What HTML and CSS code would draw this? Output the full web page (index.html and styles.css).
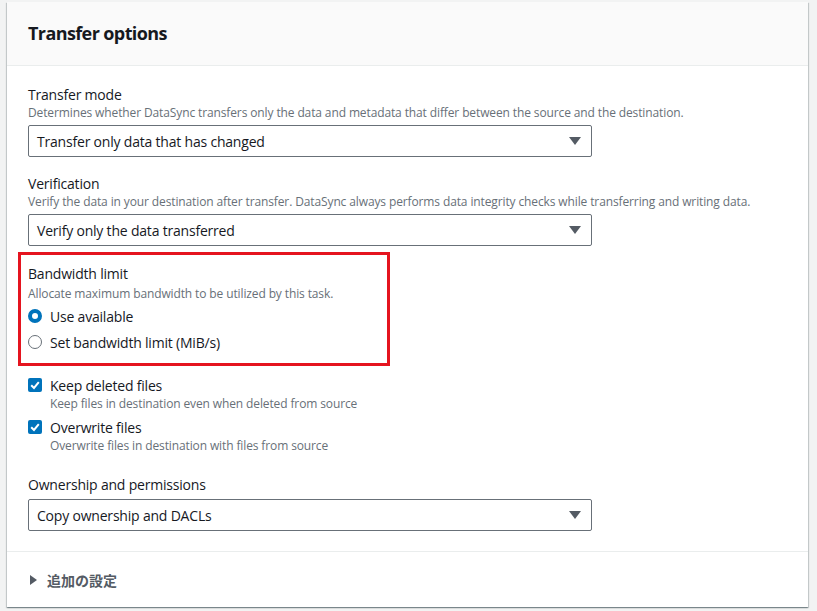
FILE: index.html
```html
<!DOCTYPE html>
<html>
<head>
<meta charset="utf-8">
<link rel="stylesheet" href="styles.css">
</head>
<body>
<div class="card">
  <div class="card-header"><h2 class="title">Transfer options</h2></div>
  <div class="card-body">
    <div class="field">
      <div class="label">Transfer mode</div>
      <div class="desc">Determines whether DataSync transfers only the data and metadata that differ between the source and the destination.</div>
      <div class="select"><span>Transfer only data that has changed</span><span class="caret"></span></div>
    </div>
    <div class="field">
      <div class="label">Verification</div>
      <div class="desc">Verify the data in your destination after transfer. DataSync always performs data integrity checks while transferring and writing data.</div>
      <div class="select"><span>Verify only the data transferred</span><span class="caret"></span></div>
    </div>
    <div class="highlight">
      <div class="label">Bandwidth limit</div>
      <div class="desc desc-bw">Allocate maximum bandwidth to be utilized by this task.</div>
      <div class="radio-list">
        <div class="radio-row"><span class="radio checked"></span><span>Use available</span></div>
        <div class="radio-row"><span class="radio"></span><span>Set bandwidth limit (MiB/s)</span></div>
      </div>
    </div>
    <div class="checks">
      <div class="check-item">
        <div class="check-row"><span class="checkbox"><svg viewBox="0 0 14 14" width="14" height="14"><path d="M3.2 7.2 L6 10 L10.8 4.2" fill="none" stroke="#fff" stroke-width="2"/></svg></span><span>Keep deleted files</span></div>
        <div class="check-desc">Keep files in destination even when deleted from source</div>
      </div>
      <div class="check-item">
        <div class="check-row"><span class="checkbox"><svg viewBox="0 0 14 14" width="14" height="14"><path d="M3.2 7.2 L6 10 L10.8 4.2" fill="none" stroke="#fff" stroke-width="2"/></svg></span><span>Overwrite files</span></div>
        <div class="check-desc">Overwrite files in destination with files from source</div>
      </div>
    </div>
    <div class="field field-own">
      <div class="label">Ownership and permissions</div>
      <div class="select"><span>Copy ownership and DACLs</span><span class="caret"></span></div>
    </div>
  </div>
  <div class="card-footer">
    <span class="expander"></span><span class="footer-text">追加の設定</span>
  </div>
</div>
</body>
</html>
```
FILE: styles.css
```css
html, body {
  margin: 0;
  padding: 0;
}
body {
  background: #f2f3f3;
  font-family: "Open Sans", "Noto Sans", "Noto Sans CJK JP", sans-serif;
  color: #16191f;
  width: 817px;
  height: 611px;
  overflow: hidden;
}
.card {
  margin: 2px 0 0 7px;
  width: 801px;
  height: 605px;
  background: #fff;
  box-shadow: 0 1px 1px 0 rgba(0, 28, 36, 0.3), 1px 1px 1px 0 rgba(0, 28, 36, 0.15), -1px 1px 1px 0 rgba(0, 28, 36, 0.15);
  display: flex;
  flex-direction: column;
}
.card-header {
  background: #fafafa;
  height: 63px;
  border-bottom: 1px solid #eaeded;
  padding: 0 21px;
  display: flex;
  align-items: center;
}
.title {
  margin: 0 0 2px;
  font-size: 18px;
  font-weight: 700;
  line-height: 24px;
  letter-spacing: -0.6px;
}
.card-body {
  padding: 19px 21px 20px;
  border-bottom: 1px solid #eaeded;
}
.field + .field {
  margin-top: 17px;
}
.label {
  font-size: 14px;
  line-height: 20px;
  letter-spacing: -0.2px;
}
.desc {
  font-size: 12px;
  line-height: 16px;
  color: #687078;
  letter-spacing: -0.12px;
  white-space: nowrap;
}
.select {
  margin-top: 4px;
  width: 564px;
  height: 32px;
  box-sizing: border-box;
  border: 1px solid #687078;
  border-radius: 2px;
  padding: 0 10px 0 8px;
  display: flex;
  align-items: center;
  justify-content: space-between;
  font-size: 14px;
  letter-spacing: -0.2px;
}
.caret {
  width: 0;
  height: 0;
  border-left: 6px solid transparent;
  border-right: 6px solid transparent;
  border-top: 8px solid #545b64;
}
.highlight {
  margin: 6px 0 0 -10px;
  width: 372px;
  box-sizing: border-box;
  border: 3px solid #e5141f;
  padding: 9px 7px 10px;
}
.desc-bw {
  margin-top: 2px;
}
.radio-list {
  margin-top: 3px;
  display: flex;
  flex-direction: column;
  gap: 4px;
}
.radio-row {
  display: flex;
  align-items: center;
  gap: 8px;
  height: 22px;
  font-size: 14px;
  letter-spacing: -0.2px;
}
.radio {
  width: 14px;
  height: 14px;
  box-sizing: border-box;
  border: 1.5px solid #687078;
  border-radius: 50%;
  flex: none;
}
.radio.checked {
  border: 4px solid #0073bb;
  background: #fff;
}
.checks {
  margin-top: 8px;
  display: flex;
  flex-direction: column;
  gap: 4px;
}
.check-row {
  display: flex;
  align-items: center;
  gap: 8px;
  height: 22px;
  font-size: 14px;
  letter-spacing: -0.2px;
}
.checkbox {
  width: 14px;
  height: 14px;
  background: #0073bb;
  border-radius: 2px;
  flex: none;
  display: flex;
}
.check-desc {
  margin-left: 22px;
  font-size: 12px;
  line-height: 16px;
  color: #687078;
  letter-spacing: -0.12px;
}
.field-own {
  margin-top: 21px;
}
.card-footer {
  flex: 1;
  padding: 0 21px 0 23px;
  display: flex;
  align-items: center;
  gap: 10px;
}
.expander {
  width: 0;
  height: 0;
  border-top: 5px solid transparent;
  border-bottom: 5px solid transparent;
  border-left: 7px solid #545b64;
}
.footer-text {
  font-family: "Noto Sans CJK JP", sans-serif;
  font-size: 14px;
  font-weight: 700;
  color: #545b64;
}
```
